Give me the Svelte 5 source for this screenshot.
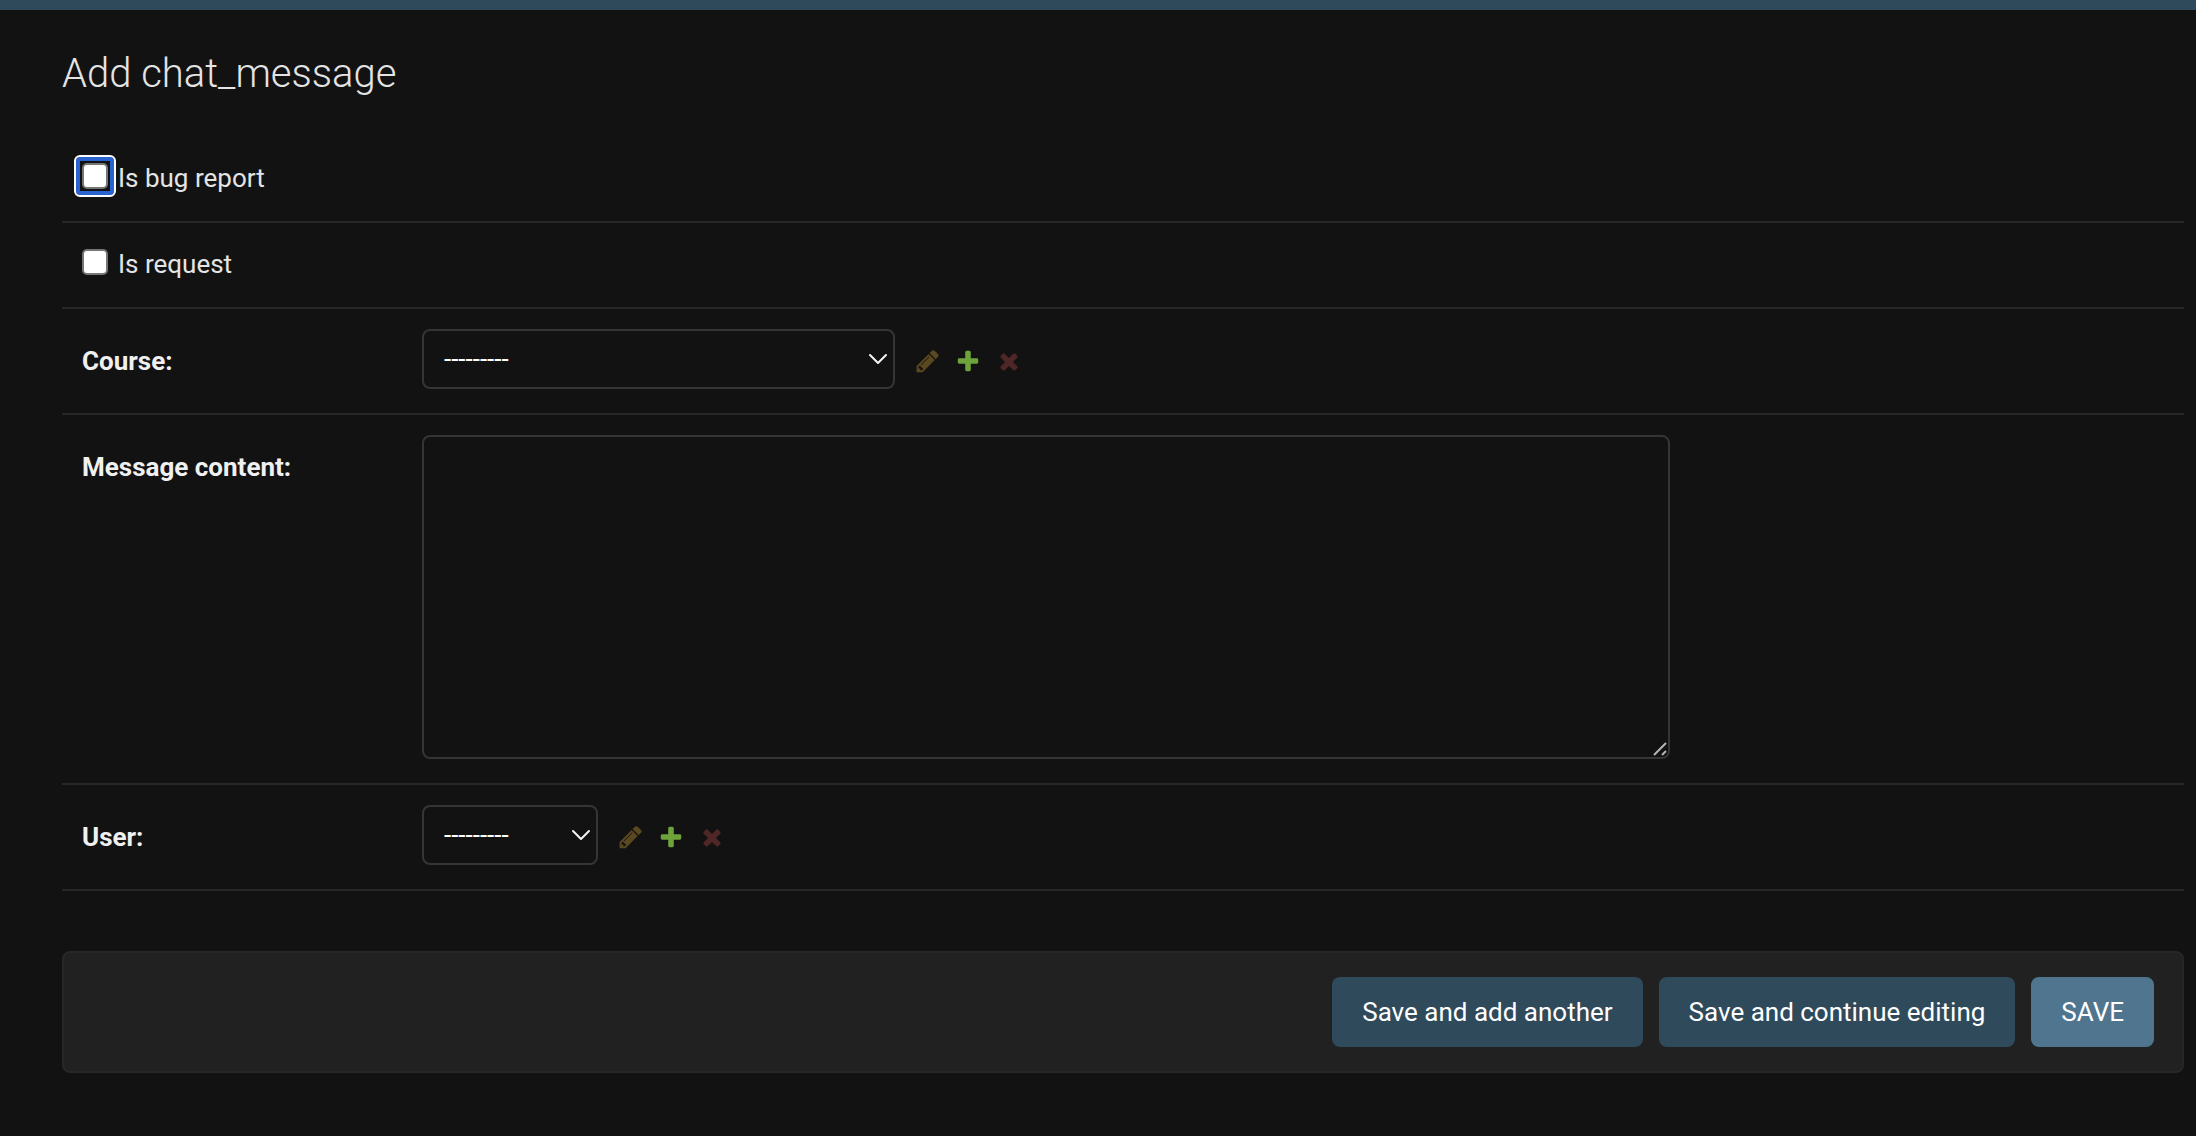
<script>
  import { onMount } from 'svelte'

  let isBugReport = false
  let isRequest = false
  let course = ''
  let messageContent = ''
  let user = ''

  let firstField

  const ICONS = {
    change: 'M491 1536l91-91-235-235-91 91v107h128v128h107zm523-928q0-22-22-22-10 0-17 7l-542 542q-7 7-7 17 0 22 22 22 10 0 17-7l542-542q7-7 7-17zm-54-192l416 416-832 832h-416v-416zm683 96q0 53-37 90l-166 166-416-416 166-165q36-38 90-38 53 0 91 38l235 234q37 39 37 91z',
    add: 'M1600 796v192q0 40-28 68t-68 28h-416v416q0 40-28 68t-68 28h-192q-40 0-68-28t-28-68v-416h-416q-40 0-68-28t-28-68v-192q0-40 28-68t68-28h416v-416q0-40 28-68t68-28h192q40 0 68 28t28 68v416h416q40 0 68 28t28 68z',
    remove: 'M1490 1322q0 40-28 68l-136 136q-28 28-68 28t-68-28l-294-294-294 294q-28 28-68 28t-68-28l-136-136q-28-28-28-68t28-68l294-294-294-294q-28-28-28-68t28-68l136-136q28-28 68-28t68 28l294 294 294-294q28-28 68-28t68 28l136 136q28 28 28 68t-28 68l-294 294 294 294q28 28 28 68z',
  }

  onMount(() => firstField.focus())
</script>

{#snippet chevron()}
  <svg class="chevron" viewBox="0 0 20 12" aria-hidden="true">
    <path d="M2 2l8 8 8-8" />
  </svg>
{/snippet}

{#snippet relatedLinks(name)}
  <div class="related">
    <button type="button" class="change" disabled aria-label="Change selected {name}">
      <svg viewBox="-50 0 1792 1792"><path d={ICONS.change} /></svg>
    </button>
    <a class="add" href="#add-{name}" aria-label="Add another {name}">
      <svg viewBox="0 0 1792 1792"><path d={ICONS.add} /></svg>
    </a>
    <button type="button" class="remove" disabled aria-label="Delete selected {name}">
      <svg viewBox="0 0 1792 1792"><path d={ICONS.remove} /></svg>
    </button>
  </div>
{/snippet}

<header></header>

<main>
  <h1>Add chat_message</h1>

  <form on:submit|preventDefault>
    <div class="row check-row">
      <input id="is-bug-report" type="checkbox" bind:this={firstField} bind:checked={isBugReport} />
      <label for="is-bug-report">Is bug report</label>
    </div>

    <div class="row check-row">
      <input id="is-request" type="checkbox" bind:checked={isRequest} />
      <label for="is-request">Is request</label>
    </div>

    <div class="row">
      <label class="required" for="course">Course:</label>
      <div class="select wide">
        <select id="course" bind:value={course}>
          <option value="">---------</option>
        </select>
        {@render chevron()}
      </div>
      {@render relatedLinks('course')}
    </div>

    <div class="row">
      <label class="required" for="message-content">Message content:</label>
      <div class="text-area">
        <textarea id="message-content" bind:value={messageContent}></textarea>
        <svg class="grip" viewBox="0 0 14 14" aria-hidden="true">
          <path d="M1 13L13 1M9 13l4-4" />
        </svg>
      </div>
    </div>

    <div class="row">
      <label class="required" for="user">User:</label>
      <div class="select">
        <select id="user" bind:value={user}>
          <option value="">---------</option>
        </select>
        {@render chevron()}
      </div>
      {@render relatedLinks('user')}
    </div>

    <div class="submit-row">
      <button type="submit" name="_addanother">Save and add another</button>
      <button type="submit" name="_continue">Save and continue editing</button>
      <button type="submit" class="default" name="_save">SAVE</button>
    </div>
  </form>
</main>

<style>
  :global(body) {
    background: #121212;
    color: #e4e4e4;
    font-family: Roboto, "Liberation Sans", sans-serif;
    font-size: 26px;
  }

  header {
    height: 10px;
    background: #2f4a5b;
  }

  main {
    padding: 40px 12px 60px 62px;
  }

  h1 {
    margin: 0 0 39px;
    font-size: 40px;
    font-weight: 300;
    line-height: 48px;
  }

  /* ── Form rows ── */
  .row {
    display: flex;
    align-items: flex-start;
    padding: 20px 20px 24px;
    border-bottom: 2px solid #272727;
  }

  .check-row {
    gap: 10px;
    padding: 26px 20px 28px;
  }

  label {
    line-height: 30px;
  }

  .required {
    flex: 0 0 340px;
    padding-top: 17px;
    color: #f0f0f0;
    font-weight: 700;
  }

  /* ── Checkboxes ── */
  input[type='checkbox'] {
    appearance: none;
    position: relative;
    box-sizing: border-box;
    width: 26px;
    height: 26px;
    margin: 0;
    border: 2px solid #767676;
    border-radius: 5px;
    background: #fff;
    outline: none;
  }

  input[type='checkbox']:checked {
    background: #2a62cf;
  }

  input[type='checkbox']:focus::before {
    content: '';
    position: absolute;
    inset: -10px;
    border: 2px solid #fff;
    border-radius: 6px;
    box-shadow: inset 0 0 0 4px #2a62cf;
  }

  /* ── Selects and text area ── */
  .select {
    position: relative;
    width: 176px;
  }

  .select.wide {
    width: 473px;
  }

  select,
  textarea {
    display: block;
    box-sizing: border-box;
    margin: 0;
    border: 2px solid #353535;
    border-radius: 8px;
    background: #121212;
    color: #fff;
    font: inherit;
  }

  select {
    appearance: none;
    width: 100%;
    height: 60px;
    padding: 0 40px 0 20px;
  }

  .chevron {
    position: absolute;
    top: 24px;
    right: 7px;
    width: 20px;
    height: 12px;
    fill: none;
    stroke: #f4f4f4;
    stroke-width: 2;
    stroke-linecap: round;
    stroke-linejoin: round;
    pointer-events: none;
  }

  .text-area {
    position: relative;
  }

  textarea {
    width: 1248px;
    max-width: 100%;
    height: 324px;
    padding: 10px 12px;
    resize: both;
  }

  textarea::-webkit-resizer {
    background: transparent;
  }

  .grip {
    position: absolute;
    right: 3px;
    bottom: 3px;
    width: 14px;
    height: 14px;
    stroke: #b5b5b5;
    stroke-width: 2;
    pointer-events: none;
  }

  /* ── Related object links ── */
  .related {
    display: flex;
    gap: 15px;
    padding: 19px 0 0 19px;
  }

  .related a,
  .related button {
    display: block;
    width: 26px;
    height: 26px;
    padding: 0;
    border: 0;
    background: none;
  }

  .related svg {
    display: block;
    width: 26px;
    height: 26px;
  }

  .change { fill: #5a4820; }
  .add    { fill: #6ea33b; }
  .remove { fill: #4e2726; }

  /* ── Submit row ── */
  .submit-row {
    display: flex;
    flex-wrap: wrap;
    justify-content: flex-end;
    gap: 16px;
    margin-top: 60px;
    padding: 24px 28px;
    border: 2px solid #272727;
    border-radius: 8px;
    background: #212121;
  }

  .submit-row button {
    height: 70px;
    padding: 0 30px;
    border: 0;
    border-radius: 8px;
    background: #2f4a5b;
    color: #fff;
    font: inherit;
    cursor: pointer;
  }

  .submit-row .default {
    background: #4f758f;
  }
</style>
